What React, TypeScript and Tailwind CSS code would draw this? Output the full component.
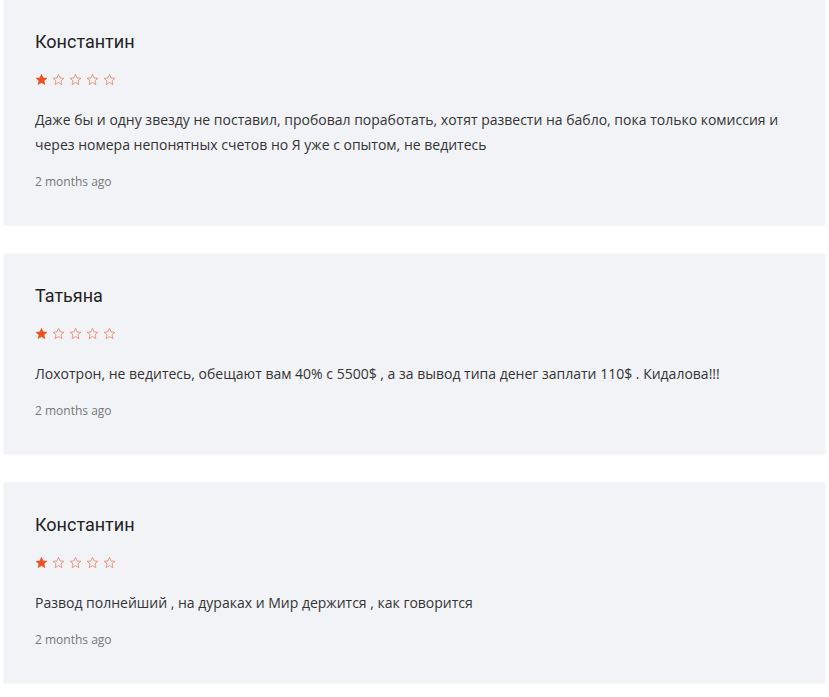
import React from "react";

const Star = ({ filled }: { filled: boolean }) => (
  <svg width="13" height="13" viewBox="0 0 24 24" className="block">
    <path
      d="M12 2.5l2.9 6.6 7.1.6-5.4 4.7 1.6 7-6.2-3.7-6.2 3.7 1.6-7L2 9.7l7.1-.6z"
      fill={filled ? "#e8521f" : "none"}
      stroke={filled ? "#e8521f" : "#e87a62"}
      strokeWidth={filled ? 1.2 : 1.4}
      strokeLinejoin="round"
    />
  </svg>
);

const reviews = [
  {
    name: "Константин",
    text: "Даже бы и одну звезду не поставил, пробовал поработать, хотят развести на бабло, пока только комиссия и через номера непонятных счетов но Я уже с опытом, не ведитесь",
  },
  {
    name: "Татьяна",
    text: "Лохотрон, не ведитесь, обещают вам 40% с 5500$ , а за вывод типа денег заплати 110$ . Кидалова!!!",
  },
  {
    name: "Константин",
    text: "Развод полнейший , на дураках и Мир держится , как говорится",
  },
];

export default function App() {
  return (
    <div className="w-[829px] h-[697px] bg-white px-[4px] flex flex-col gap-[29px] overflow-hidden">
      {reviews.map((r, i) => (
        <div
          key={i}
          className="bg-[#f2f3f7] shadow-[0_0_3px_rgba(0,0,0,0.07)] pl-[31px] pr-[28px] pt-[30px] pb-[34px]"
        >
          <div className="text-[18px] leading-[24px] text-[#222] font-['Roboto',sans-serif]">
            {r.name}
          </div>
          <div className="mt-[19px] flex gap-[4px] h-[14px]">
            <Star filled />
            <Star filled={false} />
            <Star filled={false} />
            <Star filled={false} />
            <Star filled={false} />
          </div>
          <p className="mt-[20px] text-[14px] leading-[25px] text-[#333] font-['Open_Sans',sans-serif]">
            {r.text}
          </p>
          <div className="mt-[16px] text-[12px] leading-[18px] text-[#777] font-['Open_Sans',sans-serif]">
            2 months ago
          </div>
        </div>
      ))}
    </div>
  );
}
